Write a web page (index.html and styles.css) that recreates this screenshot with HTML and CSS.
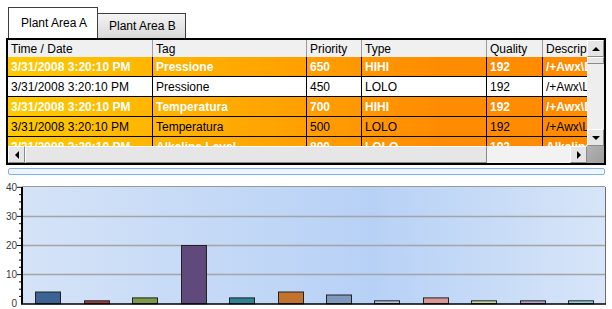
FILE: index.html
```html
<!DOCTYPE html>
<html lang="en">
<head>
  <meta charset="UTF-8">
  <title>Plant Alarms</title>
  <link rel="stylesheet" href="styles.css">
</head>
<body>
  <div class="tabs">
    <div class="tab active">Plant Area A</div>
    <div class="tab other">Plant Area B</div>
  </div>

  <div class="grid">
    <div class="view">
      <table>
        <thead>
          <tr>
            <th class="c-time">Time / Date</th>
            <th class="c-tag">Tag</th>
            <th class="c-prio">Priority</th>
            <th class="c-type">Type</th>
            <th class="c-qual">Quality</th>
            <th class="c-desc">Description</th>
          </tr>
        </thead>
        <tbody>
          <tr class="hot bold">
            <td>3/31/2008 3:20:10 PM</td><td>Pressione</td><td>650</td><td>HIHI</td><td>192</td><td>/+Awx\DB\Pressione</td>
          </tr>
          <tr>
            <td>3/31/2008 3:20:10 PM</td><td>Pressione</td><td>450</td><td>LOLO</td><td>192</td><td>/+Awx\LL\Pressione</td>
          </tr>
          <tr class="hot bold">
            <td>3/31/2008 3:20:10 PM</td><td>Temperatura</td><td>700</td><td>HIHI</td><td>192</td><td>/+Awx\DB\Temperatura</td>
          </tr>
          <tr class="hot">
            <td>3/31/2008 3:20:10 PM</td><td>Temperatura</td><td>500</td><td>LOLO</td><td>192</td><td>/+Awx\LL\Temperatura</td>
          </tr>
          <tr class="hot bold">
            <td>3/31/2008 3:20:10 PM</td><td>Alkaline Level</td><td>800</td><td>LOLO</td><td>192</td><td>Alkaline Level</td>
          </tr>
        </tbody>
      </table>
    </div>
    <div class="vscroll">
      <div class="sbtn up"></div>
      <div class="vthumb"></div>
      <div class="track"></div>
      <div class="sbtn down"></div>
    </div>
    <div class="hscroll">
      <div class="sbtn left"></div>
      <div class="hthumb"></div>
      <div class="track"></div>
      <div class="sbtn right"></div>
    </div>
    <div class="corner"></div>
  </div>

  <div class="splitter"></div>

  <div class="chart">
    <svg width="612" height="131" viewBox="0 0 612 131">
      <defs>
        <linearGradient id="plotbg" x1="0" x2="1" y1="0" y2="0">
          <stop offset="0" stop-color="#d5e3f7"/>
          <stop offset="0.6" stop-color="#b7d1f6"/>
          <stop offset="1" stop-color="#d7e5f8"/>
        </linearGradient>
      </defs>
      <rect x="22" y="9" width="583" height="117" fill="url(#plotbg)"/>
      <line x1="22" y1="8.5" x2="605" y2="8.5" stroke="#9a9a9a"/>
      <line x1="605.5" y1="9" x2="605.5" y2="126" stroke="#6f6f6f"/>
      <g stroke="#a4a4a4" stroke-width="1.5">
        <line x1="22" y1="38.4" x2="605" y2="38.4"/>
        <line x1="22" y1="67.5" x2="605" y2="67.5"/>
        <line x1="22" y1="96.6" x2="605" y2="96.6"/>
      </g>
      <g stroke="#222" stroke-width="1">
        <rect x="35.5" y="114" width="25" height="11.7" fill="#3b6494"/>
        <rect x="84.5" y="122.8" width="25" height="2.9" fill="#a33c3c"/>
        <rect x="132.5" y="119.9" width="25" height="5.8" fill="#7e9a49"/>
        <rect x="181.5" y="67.5" width="25" height="58.2" fill="#604a7b"/>
        <rect x="229.5" y="119.9" width="25" height="5.8" fill="#2f8396"/>
        <rect x="278.5" y="114" width="25" height="11.7" fill="#c4732f"/>
        <rect x="326.5" y="117" width="25" height="8.7" fill="#7f98bb"/>
        <rect x="374.5" y="122.8" width="25" height="2.9" fill="#b3c7e3"/>
        <rect x="423.5" y="119.9" width="25" height="5.8" fill="#da9694"/>
        <rect x="471.5" y="122.8" width="25" height="2.9" fill="#c5d89c"/>
        <rect x="520.5" y="122.8" width="25" height="2.9" fill="#b4a3c8"/>
        <rect x="568.5" y="122.8" width="25" height="2.9" fill="#93cddd"/>
      </g>
      <g stroke="#111" stroke-width="1">
        <line x1="17" y1="9.3" x2="22" y2="9.3"/>
        <line x1="17" y1="38.4" x2="22" y2="38.4"/>
        <line x1="17" y1="67.5" x2="22" y2="67.5"/>
        <line x1="17" y1="96.6" x2="22" y2="96.6"/>
        <line x1="19" y1="16.6" x2="22" y2="16.6"/>
        <line x1="19" y1="23.9" x2="22" y2="23.9"/>
        <line x1="19" y1="31.1" x2="22" y2="31.1"/>
        <line x1="19" y1="45.7" x2="22" y2="45.7"/>
        <line x1="19" y1="53" x2="22" y2="53"/>
        <line x1="19" y1="60.2" x2="22" y2="60.2"/>
        <line x1="19" y1="74.8" x2="22" y2="74.8"/>
        <line x1="19" y1="82.1" x2="22" y2="82.1"/>
        <line x1="19" y1="89.3" x2="22" y2="89.3"/>
        <line x1="19" y1="103.9" x2="22" y2="103.9"/>
        <line x1="19" y1="111.2" x2="22" y2="111.2"/>
        <line x1="19" y1="118.4" x2="22" y2="118.4"/>
      </g>
      <line x1="22" y1="9" x2="22" y2="126" stroke="#000" stroke-width="2"/>
      <line x1="21" y1="126" x2="606" y2="126" stroke="#000" stroke-width="1.5"/>
      <g class="axis-label" text-anchor="end">
        <text x="17" y="13">40</text>
        <text x="17" y="42">30</text>
        <text x="17" y="71">20</text>
        <text x="17" y="100">10</text>
        <text x="17" y="129">0</text>
      </g>
    </svg>
  </div>
</body>
</html>
```

FILE: styles.css
```css
body {
  margin: 0;
  font-family: "Liberation Sans", Arial, sans-serif;
  font-size: 12px;
  background-color: #fff;
  color: #000;
}

/* tabs */
.tabs {
  display: flex;
  align-items: flex-end;
  height: 31px;
  padding: 7px 0 0 8px;
}
.tab {
  box-sizing: border-box;
  border: 1px solid #3e3e3e;
  border-bottom: none;
  white-space: nowrap;
}
.tab.active {
  width: 90px;
  height: 31px;
  padding-left: 12px;
  line-height: 30px;
  background-color: #fff;
}
.tab.other {
  width: 88px;
  height: 25px;
  padding-left: 11px;
  line-height: 25px;
  border-left: none;
  background: linear-gradient(#f4f4f4, #d8d8d8);
}

/* alarm grid */
.grid {
  box-sizing: border-box;
  width: 600px;
  height: 127px;
  margin-left: 6px;
  border: 2px solid #000;
  display: grid;
  grid-template-columns: 1fr 17px;
  grid-template-rows: 1fr 17px;
}
.view {
  overflow: hidden;
}
table {
  border-collapse: separate;
  border-spacing: 0;
  table-layout: fixed;
  width: 680px;
}
th, td {
  box-sizing: border-box;
  padding: 0 3px;
  white-space: nowrap;
  overflow: hidden;
  text-align: left;
}
th {
  height: 17px;
  font-weight: normal;
  background-color: #f0f0f0;
  border-right: 1px solid #9c9c9c;
}
.c-time { width: 145px; }
.c-tag { width: 154px; }
.c-prio { width: 55px; }
.c-type { width: 125px; }
.c-qual { width: 56px; }
.c-desc { width: 145px; }
td {
  height: 20px;
  border-right: 1px solid #000;
  border-bottom: 1px solid #000;
}
tr.hot {
  background: linear-gradient(90deg, #ffca00 0px, #ff8c00 430px);
}
tr.bold td {
  color: #fff;
  font-weight: bold;
}

/* scrollbars */
.vscroll {
  display: flex;
  flex-direction: column;
  background-color: #eeeeee;
}
.hscroll {
  display: flex;
  background-color: #f2f2f2;
}
.track {
  flex: 1;
}
.sbtn, .vthumb, .hthumb {
  box-sizing: border-box;
  background-color: #e6e6e6;
  border: 1px solid;
  border-color: #fff #8a8a8a #8a8a8a #fff;
}
.sbtn {
  width: 17px;
  height: 17px;
  display: flex;
  align-items: center;
  justify-content: center;
}
.sbtn::after {
  content: "";
  width: 0;
  height: 0;
  border: 4px solid transparent;
}
.sbtn.up::after { border-bottom-color: #000; border-top-width: 0; }
.sbtn.down::after { border-top-color: #000; border-bottom-width: 0; }
.sbtn.left::after { border-right-color: #000; border-left-width: 0; }
.sbtn.right::after { border-left-color: #000; border-right-width: 0; }
.vthumb {
  height: 7px;
}
.hthumb {
  width: 462px;
}
.corner {
  background: linear-gradient(135deg, #b4b4b4, #9c9c9c);
}

/* splitter */
.splitter {
  box-sizing: border-box;
  width: 597px;
  height: 7px;
  margin: 3px 0 0 8px;
  border: 1px solid #7fb2e6;
  border-radius: 2px;
  background-color: #eef5fd;
}

/* chart */
.chart {
  margin-top: 3px;
}
.chart svg {
  display: block;
}
.axis-label {
  font-family: "Liberation Sans", Arial, sans-serif;
  font-size: 10px;
  fill: #3a3a3a;
}
```
